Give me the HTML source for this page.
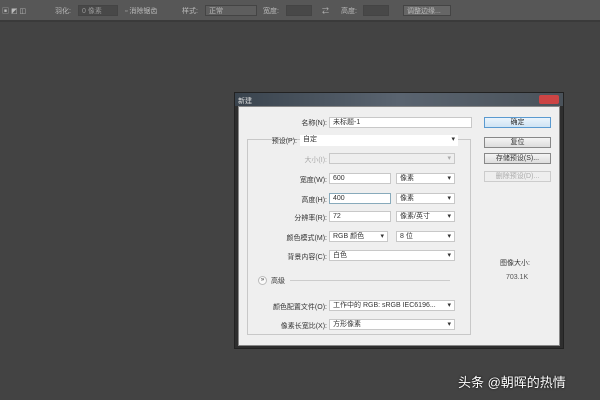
<!DOCTYPE html>
<html><head><meta charset="utf-8"><style>
*{margin:0;padding:0;box-sizing:border-box}
body{width:600px;height:400px;background:#434343;position:relative;overflow:hidden;font-family:"Liberation Sans","Noto Sans CJK SC",sans-serif;font-size:7px;color:#333}
.a{position:absolute}
.tb{left:0;top:0;width:600px;height:22px;background:#575757;border-bottom:2px solid #3a3a3a}
.tb span{position:absolute;top:6px;color:#bbb;font-size:7px}
.tf{position:absolute;top:5px;height:11px;background:#484848;border:1px solid #444}
.dlg{left:234px;top:92px;width:330px;height:257px;background:#2e2e2e;border:1px solid #222}
.tt{left:235px;top:93px;width:328px;height:13px;background:linear-gradient(90deg,#3a444e,#5a6470,#4a525a)}
.cl{left:238px;top:106px;width:322px;height:240px;background:#efefef;border:1px solid #888}
.lb{position:absolute;text-align:right;width:90px;color:#333}
.in{position:absolute;height:11px;background:#fff;border:1px solid #c8c8c8;padding-left:3px;line-height:9px;font-size:7px}
.sel::after{content:"▾";position:absolute;right:3px;top:0;font-size:7px}
.bt{position:absolute;left:484px;width:67px;height:11px;border:1px solid #888;background:linear-gradient(#f4f4f4,#dcdcdc);text-align:center;line-height:9px;font-size:7px}
</style></head><body>
<div class="a tb">
<span style="left:2px">▣ ◩ ◫</span><span style="left:55px">羽化:</span><div class="tf" style="left:78px;width:40px"></div><span style="left:82px;color:#999">0 像素</span>
<span style="left:125px">▫ 消除锯齿</span><span style="left:182px">样式:</span><div class="tf" style="left:205px;width:52px;background:#5e5e5e"></div><span style="left:209px">正常</span>
<span style="left:263px">宽度:</span><div class="tf" style="left:286px;width:26px"></div><span style="left:322px">⇄</span><span style="left:341px">高度:</span><div class="tf" style="left:363px;width:26px"></div>
<div class="tf" style="left:403px;width:48px;background:#666"></div><span style="left:407px">调整边缘...</span>
</div>
<div class="a dlg"></div>
<div class="a tt"><span style="position:absolute;left:3px;top:3px;color:#ddd;font-size:7px">新建</span><div style="position:absolute;right:4px;top:2px;width:20px;height:9px;background:#c44;border-radius:2px"></div></div>
<div class="a cl"></div>
<div class="a" style="left:247px;top:139px;width:224px;height:196px;border:1px solid #c8c8c8"></div>
<div class="lb" style="left:237px;top:118px">名称(N):</div><div class="in" style="left:329px;top:117px;width:143px">未标题-1</div>
<div class="lb" style="left:207px;top:136px">预设(P):</div><div class="in sel" style="left:300px;top:135px;width:158px;border:none;background:#fff">自定</div>
<div class="lb" style="left:237px;top:155px;color:#aaa">大小(I):</div><div class="in sel" style="left:329px;top:153px;width:126px;background:#eee;color:#aaa"></div>
<div class="lb" style="left:237px;top:175px">宽度(W):</div><div class="in" style="left:329px;top:173px;width:62px">600</div><div class="in sel" style="left:396px;top:173px;width:59px">像素</div>
<div class="lb" style="left:237px;top:195px">高度(H):</div><div class="in" style="left:329px;top:193px;width:62px;border-color:#8ab">400</div><div class="in sel" style="left:396px;top:193px;width:59px">像素</div>
<div class="lb" style="left:237px;top:213px">分辨率(R):</div><div class="in" style="left:329px;top:211px;width:62px">72</div><div class="in sel" style="left:396px;top:211px;width:59px">像素/英寸</div>
<div class="lb" style="left:237px;top:233px">颜色模式(M):</div><div class="in sel" style="left:329px;top:231px;width:59px">RGB 颜色</div><div class="in sel" style="left:396px;top:231px;width:59px">8 位</div>
<div class="lb" style="left:237px;top:252px">背景内容(C):</div><div class="in sel" style="left:329px;top:250px;width:126px">白色</div>
<div class="a" style="left:258px;top:276px;width:9px;height:9px;border-radius:50%;border:1px solid #bbb;background:#fafafa;font-size:6px;text-align:center;line-height:7px">»</div>
<div class="a" style="left:271px;top:276px">高级</div><div class="a" style="left:290px;top:280px;width:160px;border-top:1px solid #ccc"></div>
<div class="lb" style="left:237px;top:302px">颜色配置文件(O):</div><div class="in sel" style="left:329px;top:300px;width:126px">工作中的 RGB: sRGB IEC6196...</div>
<div class="lb" style="left:237px;top:321px">像素长宽比(X):</div><div class="in sel" style="left:329px;top:319px;width:126px">方形像素</div>
<div class="bt" style="top:117px;border-color:#5a9ad0;background:linear-gradient(#eaf4fc,#cfe4f4)">确定</div>
<div class="bt" style="top:137px">复位</div>
<div class="bt" style="top:153px">存储预设(S)...</div>
<div class="bt" style="top:171px;color:#aaa;border-color:#ccc;background:#eee">删除预设(D)...</div>
<div class="a" style="left:500px;top:258px">图像大小:</div>
<div class="a" style="left:506px;top:274px;color:#555">703.1K</div>
<div class="a" style="left:458px;top:372px;color:#fff;font-size:13px;text-shadow:0 0 2px #000">头条 @朝晖的热情</div>
</body></html>
